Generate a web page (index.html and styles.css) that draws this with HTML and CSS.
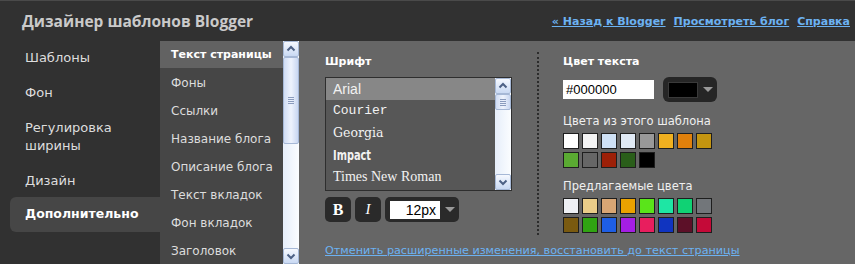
FILE: index.html
```html
<!DOCTYPE html>
<html>
<head>
<meta charset="UTF-8">
<title>Дизайнер шаблонов Blogger</title>
<link rel="stylesheet" href="styles.css">
</head>
<body>
    <div class="header">
        <div class="title">Дизайнер шаблонов Blogger</div>
        <div class="top-links">
            <a href="#">« Назад к Blogger</a>
            <a href="#">Просмотреть блог</a>
            <a href="#">Справка</a>
        </div>
    </div>
    <div class="main">
        <ul class="nav">
            <li>Шаблоны</li>
            <li>Фон</li>
            <li>Регулировка<br>ширины</li>
            <li>Дизайн</li>
            <li class="active">Дополнительно</li>
        </ul>
        <div class="sublist">
            <ul class="sub-items">
                <li class="active">Текст страницы</li>
                <li>Фоны</li>
                <li>Ссылки</li>
                <li>Название блога</li>
                <li>Описание блога</li>
                <li>Текст вкладок</li>
                <li>Фон вкладок</li>
                <li>Заголовок</li>
            </ul>
            <div class="vscroll tall">
                <div class="sb-btn"><svg width="14" height="14" viewBox="0 0 14 14"><path d="M3.5 8.5 L7 5 L10.5 8.5" fill="none" stroke="#4d6185" stroke-width="2"/></svg></div>
                <div class="sb-thumb"><span></span><span></span><span></span><span></span></div>
                <div class="sb-track"></div>
                <div class="sb-btn"><svg width="14" height="14" viewBox="0 0 14 14"><path d="M3.5 5.5 L7 9 L10.5 5.5" fill="none" stroke="#4d6185" stroke-width="2"/></svg></div>
            </div>
        </div>
        <div class="panel">
            <div class="cols">
                <div class="font-col">
                    <div class="col-title">Шрифт</div>
                    <div class="listbox">
                        <ul class="fonts">
                            <li class="active f-arial">Arial</li>
                            <li class="f-courier">Courier</li>
                            <li class="f-georgia">Georgia</li>
                            <li class="f-impact"><span>Impact</span></li>
                            <li class="f-times">Times New Roman</li>
                        </ul>
                        <div class="vscroll">
                            <div class="sb-btn"><svg width="14" height="14" viewBox="0 0 14 14"><path d="M3.5 8.5 L7 5 L10.5 8.5" fill="none" stroke="#4d6185" stroke-width="2"/></svg></div>
                            <div class="sb-thumb small"><span></span><span></span><span></span><span></span></div>
                            <div class="sb-track"></div>
                            <div class="sb-btn"><svg width="14" height="14" viewBox="0 0 14 14"><path d="M3.5 5.5 L7 9 L10.5 5.5" fill="none" stroke="#4d6185" stroke-width="2"/></svg></div>
                        </div>
                    </div>
                    <div class="toolbar">
                        <div class="tb-btn bold">B</div>
                        <div class="tb-btn italic">I</div>
                        <div class="tb-size">
                            <div class="size-input">12px</div>
                            <span class="caret"></span>
                        </div>
                    </div>
                </div>
                <div class="sep"></div>
                <div class="color-col">
                    <div class="col-title">Цвет текста</div>
                    <div class="color-row">
                        <div class="hex-input">#000000</div>
                        <div class="color-btn">
                            <span class="color-preview"></span>
                            <span class="caret"></span>
                        </div>
                    </div>
                    <div class="label first">Цвета из этого шаблона</div>
                    <div class="swatches">
                        <span style="background:#ffffff"></span>
                        <span style="background:#f2f2f2"></span>
                        <span style="background:#cfe1f5"></span>
                        <span style="background:#e0e9f4"></span>
                        <span style="background:#999999"></span>
                        <span style="background:#f0b020"></span>
                        <span style="background:#e0800c"></span>
                        <span style="background:#c49510"></span>
                        <span style="background:#5aaa32"></span>
                        <span style="background:#666666"></span>
                        <span style="background:#9c2008"></span>
                        <span style="background:#2a5e1a"></span>
                        <span style="background:#000000"></span>
                    </div>
                    <div class="label">Предлагаемые цвета</div>
                    <div class="swatches">
                        <span style="background:#eef0f4"></span>
                        <span style="background:#e9cc88"></span>
                        <span style="background:#d8a674"></span>
                        <span style="background:#eaa200"></span>
                        <span style="background:#5ae41a"></span>
                        <span style="background:#1ee6a4"></span>
                        <span style="background:#10d274"></span>
                        <span style="background:#72767a"></span>
                        <span style="background:#7a5a10"></span>
                        <span style="background:#30a412"></span>
                        <span style="background:#1e5ee4"></span>
                        <span style="background:#a41ee4"></span>
                        <span style="background:#e81e5e"></span>
                        <span style="background:#1034c0"></span>
                        <span style="background:#5c1028"></span>
                        <span style="background:#c40a38"></span>
                    </div>
                </div>
            </div>
            <a class="reset-link" href="#">Отменить расширенные изменения, восстановить до текст страницы</a>
        </div>
    </div>
</body>
</html>
```

FILE: styles.css
```css
body {
    margin: 0;
    padding: 0;
    width: 855px;
    height: 264px;
    overflow: hidden;
    background: #666;
    font-family: "DejaVu Sans", sans-serif;
    font-size: 12px;
    color: #eee;
}
ul {
    list-style: none;
    margin: 0;
    padding: 0;
}
a {
    color: #6cb2f2;
}
.header {
    height: 40px;
    border-top: 1px solid #4a4a4a;
    background: #313131;
    display: flex;
    align-items: center;
    justify-content: space-between;
    padding: 0 5px 0 22px;
}
.title {
    font-family: "Open Sans", sans-serif;
    font-weight: 700;
    font-size: 15.5px;
    color: #cacaca;
}
.top-links {
    display: flex;
    gap: 8px;
}
.top-links a {
    font-weight: bold;
    font-size: 11px;
}
.main {
    display: flex;
    height: 223px;
}
.nav {
    width: 160px;
    background: #313131;
    font-size: 13px;
    color: #ddd;
}
.nav li {
    padding: 8px 0 9px 25px;
    line-height: 18px;
}
.nav li.active {
    margin: -2px 0 0 10px;
    padding-left: 15px;
    background: #464646;
    border-radius: 6px 0 0 6px;
    font-weight: bold;
    font-size: 12.5px;
    color: #fff;
}
.sublist {
    display: flex;
}
.sub-items {
    width: 123px;
    background: #464646;
}
.sub-items li {
    height: 28px;
    line-height: 28px;
    padding-left: 11px;
    color: #ddd;
}
.sub-items li.active {
    height: 27px;
    line-height: 27px;
    margin-bottom: 1px;
    background: #626262;
    font-weight: bold;
    font-size: 11px;
    color: #fff;
}
.vscroll {
    width: 16px;
    display: flex;
    flex-direction: column;
    background: linear-gradient(to right, #e6eefa, #fbfdff);
}
.sb-btn {
    height: 14px;
    border: 1px solid #a6b8d6;
    border-radius: 2px;
    background: linear-gradient(#f6f9ff, #c9d9f3);
    display: flex;
    justify-content: center;
    align-items: center;
}
.sb-thumb {
    height: 85px;
    border: 1px solid #a6b8d6;
    border-radius: 2px;
    background: linear-gradient(to right, #cfdcf4, #eef3fd 50%, #c9d7f1);
    display: flex;
    flex-direction: column;
    justify-content: center;
    align-items: center;
    gap: 1px;
}
.sb-thumb span {
    width: 6px;
    height: 1px;
    background: #8a9bbd;
}
.sb-thumb.small {
    height: 14px;
}
.sb-track {
    flex: 1;
}
.panel {
    flex: 1;
    padding: 11px 0 0 26px;
}
.cols {
    display: flex;
    height: 183px;
}
.col-title {
    font-weight: bold;
    font-size: 11px;
    line-height: 18px;
    margin-top: 1px;
    color: #fff;
}
.font-col {
    width: 187px;
}
.listbox {
    margin-top: 6px;
    height: 112px;
    border: 1px solid #2e2e2e;
    background: #575757;
    display: flex;
}
.fonts {
    flex: 1;
}
.fonts li {
    height: 22px;
    line-height: 22px;
    padding-left: 7px;
    color: #f2f2f2;
    font-size: 14px;
}
.fonts li.active {
    background: #878787;
}
.f-arial {
    font-family: "Liberation Sans", sans-serif;
}
.f-courier {
    font-family: "Liberation Mono", monospace;
    font-size: 13px !important;
}
.f-georgia {
    font-family: "DejaVu Serif", serif;
    font-size: 12.5px !important;
}
.f-impact span {
    display: inline-block;
    font-family: "DejaVu Sans Condensed", sans-serif;
    font-weight: bold;
    font-size: 14px;
    transform: scaleX(0.78);
    transform-origin: left center;
}
.f-times {
    font-family: "Liberation Serif", serif;
}
.toolbar {
    margin-top: 6px;
    display: flex;
    gap: 4px;
    height: 25px;
}
.tb-btn {
    width: 26px;
    background: #2a2a2a;
    border-radius: 5px;
    display: flex;
    justify-content: center;
    align-items: center;
    color: #fff;
    font-family: "Liberation Serif", serif;
    font-size: 16px;
}
.tb-btn.bold {
    font-weight: bold;
}
.tb-btn.italic {
    font-style: italic;
    font-size: 15px;
}
.tb-size {
    width: 74px;
    background: #2a2a2a;
    border-radius: 5px;
    display: flex;
    align-items: center;
    padding-left: 5px;
    box-sizing: border-box;
}
.size-input {
    width: 50px;
    height: 18px;
    line-height: 18px;
    background: #fff;
    color: #000;
    text-align: right;
    padding-right: 4px;
    box-sizing: border-box;
    font-family: "Liberation Sans", sans-serif;
    font-size: 14px;
}
.caret {
    width: 0;
    height: 0;
    border-left: 5px solid transparent;
    border-right: 5px solid transparent;
    border-top: 5px solid #999;
    margin-left: 5px;
}
.sep {
    width: 0;
    margin: 0 24px 0 25px;
    border-left: 2px dotted #2c2c2c;
}
.color-row {
    margin-top: 6px;
    display: flex;
    align-items: center;
    gap: 9px;
}
.hex-input {
    width: 91px;
    height: 19px;
    line-height: 19px;
    background: #fff;
    color: #000;
    padding-left: 3px;
    box-sizing: border-box;
    font-family: "Liberation Sans", sans-serif;
    font-size: 13px;
}
.color-btn {
    width: 54px;
    height: 25px;
    background: #262626;
    border-radius: 6px;
    display: flex;
    align-items: center;
    padding-left: 5px;
    box-sizing: border-box;
}
.color-preview {
    width: 28px;
    height: 14px;
    background: #000;
    border: 1px solid #3a3a3a;
}
.label {
    margin-top: 10px;
    line-height: 16px;
    font-size: 11.5px;
    color: #f0f0f0;
}
.label.first {
    margin-top: 11px;
}
.swatches {
    margin-top: 4px;
    display: grid;
    grid-template-columns: repeat(8, 16px);
    gap: 3px;
}
.swatches span {
    height: 16px;
    box-sizing: border-box;
    border: 1px solid #1e1e1e;
}
.reset-link {
    display: inline-block;
    margin-top: 8px;
    line-height: 16px;
    font-size: 11.2px;
}
```
